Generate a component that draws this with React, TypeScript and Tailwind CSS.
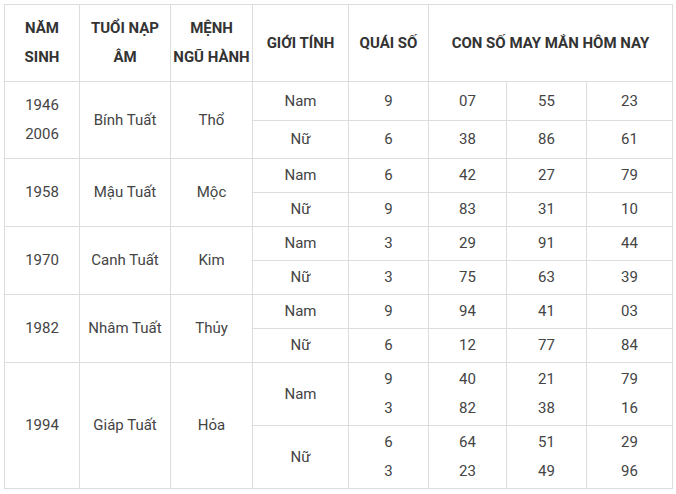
const rows = [
  {
    year: ['1946', '2006'],
    tuoi: 'Bính Tuất',
    menh: 'Thổ',
    h: ['h-[39px]', 'h-[38px]'],
    sub: [
      { g: 'Nam', q: ['9'], n: [['07'], ['55'], ['23']] },
      { g: 'Nữ', q: ['6'], n: [['38'], ['86'], ['61']] },
    ],
  },
  {
    year: ['1958'],
    tuoi: 'Mậu Tuất',
    menh: 'Mộc',
    h: ['h-[34px]', 'h-[34px]'],
    sub: [
      { g: 'Nam', q: ['6'], n: [['42'], ['27'], ['79']] },
      { g: 'Nữ', q: ['9'], n: [['83'], ['31'], ['10']] },
    ],
  },
  {
    year: ['1970'],
    tuoi: 'Canh Tuất',
    menh: 'Kim',
    h: ['h-[34px]', 'h-[34px]'],
    sub: [
      { g: 'Nam', q: ['3'], n: [['29'], ['91'], ['44']] },
      { g: 'Nữ', q: ['3'], n: [['75'], ['63'], ['39']] },
    ],
  },
  {
    year: ['1982'],
    tuoi: 'Nhâm Tuất',
    menh: 'Thủy',
    h: ['h-[34px]', 'h-[34px]'],
    sub: [
      { g: 'Nam', q: ['9'], n: [['94'], ['41'], ['03']] },
      { g: 'Nữ', q: ['6'], n: [['12'], ['77'], ['84']] },
    ],
  },
  {
    year: ['1994'],
    tuoi: 'Giáp Tuất',
    menh: 'Hỏa',
    h: ['h-[63px]', 'h-[63px]'],
    sub: [
      { g: 'Nam', q: ['9', '3'], n: [['40', '82'], ['21', '38'], ['79', '16']] },
      { g: 'Nữ', q: ['6', '3'], n: [['64', '23'], ['51', '49'], ['29', '96']] },
    ],
  },
];

const cell = 'border border-[#dddddd] text-center align-middle p-0';

function Lines({ items }: { items: string[] }) {
  return (
    <>
      {items.map((t, i) => (
        <div key={i} className="leading-[29px]">
          {t}
        </div>
      ))}
    </>
  );
}

export default function App() {
  return (
    <div
      className="w-[676px] h-[494px] bg-white pl-[4px] pt-[4px] overflow-hidden"
      style={{ fontFamily: 'Roboto, "Liberation Sans", sans-serif' }}
    >
      <table className="table-fixed border-collapse w-[668px] text-[15px] text-[#444444]">
        <colgroup>
          <col className="w-[75px]" />
          <col className="w-[91px]" />
          <col className="w-[82px]" />
          <col className="w-[96px]" />
          <col className="w-[80px]" />
          <col className="w-[78px]" />
          <col className="w-[80px]" />
          <col className="w-[86px]" />
        </colgroup>
        <thead>
          <tr className="h-[77px] font-bold text-[#333333] leading-[29px]">
            <th className={cell}>
              NĂM
              <br />
              SINH
            </th>
            <th className={cell}>
              TUỔI NẠP
              <br />
              ÂM
            </th>
            <th className={cell}>
              MỆNH
              <br />
              NGŨ HÀNH
            </th>
            <th className={cell}>GIỚI TÍNH</th>
            <th className={cell}>QUÁI SỐ</th>
            <th className={cell} colSpan={3}>
              CON SỐ MAY MẮN HÔM NAY
            </th>
          </tr>
        </thead>
        <tbody>
          {rows.map((r) =>
            r.sub.map((s, i) => (
              <tr key={r.year[0] + s.g} className={r.h[i]}>
                {i === 0 && (
                  <>
                    <td className={cell} rowSpan={2}>
                      <Lines items={r.year} />
                    </td>
                    <td className={cell} rowSpan={2}>
                      {r.tuoi}
                    </td>
                    <td className={cell} rowSpan={2}>
                      {r.menh}
                    </td>
                  </>
                )}
                <td className={cell}>{s.g}</td>
                <td className={cell}>
                  <Lines items={s.q} />
                </td>
                {s.n.map((col, k) => (
                  <td key={k} className={cell}>
                    <Lines items={col} />
                  </td>
                ))}
              </tr>
            ))
          )}
        </tbody>
      </table>
    </div>
  );
}
